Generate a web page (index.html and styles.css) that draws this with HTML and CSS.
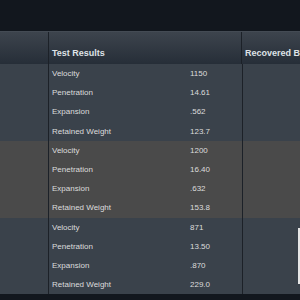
FILE: index.html
```html
<!DOCTYPE html>
<html>
<head>
<meta charset="utf-8">
<link rel="stylesheet" href="styles.css">
</head>
<body>
<div class="topbar"></div>
<div class="grid">
  <div class="row head">
    <div class="c1"></div>
    <div class="c2"><span class="htext">Test Results</span></div>
    <div class="c3"><span class="htext">Recovered Bullet</span></div>
  </div>
  <div class="row group blue">
    <div class="c1"></div>
    <div class="c2">
      <div class="line"><span class="lbl">Velocity</span><span class="val">1150</span></div>
      <div class="line"><span class="lbl">Penetration</span><span class="val">14.61</span></div>
      <div class="line"><span class="lbl">Expansion</span><span class="val">.562</span></div>
      <div class="line"><span class="lbl">Retained Weight</span><span class="val">123.7</span></div>
    </div>
    <div class="c3"></div>
  </div>
  <div class="row group gray">
    <div class="c1"></div>
    <div class="c2">
      <div class="line"><span class="lbl">Velocity</span><span class="val">1200</span></div>
      <div class="line"><span class="lbl">Penetration</span><span class="val">16.40</span></div>
      <div class="line"><span class="lbl">Expansion</span><span class="val">.632</span></div>
      <div class="line"><span class="lbl">Retained Weight</span><span class="val">153.8</span></div>
    </div>
    <div class="c3"></div>
  </div>
  <div class="row group blue">
    <div class="c1"></div>
    <div class="c2">
      <div class="line"><span class="lbl">Velocity</span><span class="val">871</span></div>
      <div class="line"><span class="lbl">Penetration</span><span class="val">13.50</span></div>
      <div class="line"><span class="lbl">Expansion</span><span class="val">.870</span></div>
      <div class="line"><span class="lbl">Retained Weight</span><span class="val">229.0</span></div>
    </div>
    <div class="c3"><div class="photo"></div></div>
  </div>
</div>
</body>
</html>
```

FILE: styles.css
```css
html, body {
  margin: 0;
  padding: 0;
  background: #12171e;
  font-family: "Liberation Sans", Arial, sans-serif;
  overflow: hidden;
}
.topbar {
  height: 31px;
  background: #12171e;
}
.grid {
  width: 300px;
  overflow: hidden;
}
.row {
  display: flex;
}
.c1 {
  width: 48px;
  flex: none;
  border-right: 1px solid #1c2128;
}
.c2 {
  width: 193px;
  flex: none;
  border-right: 1px solid #1c2128;
}
.c3 {
  flex: 1;
  display: flex;
  justify-content: flex-end;
  align-items: flex-start;
  overflow: hidden;
  white-space: nowrap;
}
.head {
  height: 33px;
  background: linear-gradient(#3d444d, #262e38);
  border-top: 1px solid #444b54;
  box-sizing: border-box;
}
.head .c2, .head .c3 {
  display: flex;
  align-items: flex-end;
  justify-content: flex-start;
  padding: 0 0 6px 3px;
  box-sizing: border-box;
}
.head .c3 {
  padding-left: 3px;
}
.htext {
  font-size: 9px;
  font-weight: bold;
  color: #dfe3e7;
}
.blue { background: #3a424b; }
.gray { background: #4a4a4a; }
.line {
  height: 19.2px;
  display: flex;
  align-items: center;
  font-size: 8px;
  color: #dcdcdc;
}
.lbl {
  width: 138px;
  padding-left: 3px;
}
.val {
  flex: 1;
}
.photo {
  width: 2px;
  height: 56px;
  margin-top: 10px;
  background: #e6e6e6;
}
```
